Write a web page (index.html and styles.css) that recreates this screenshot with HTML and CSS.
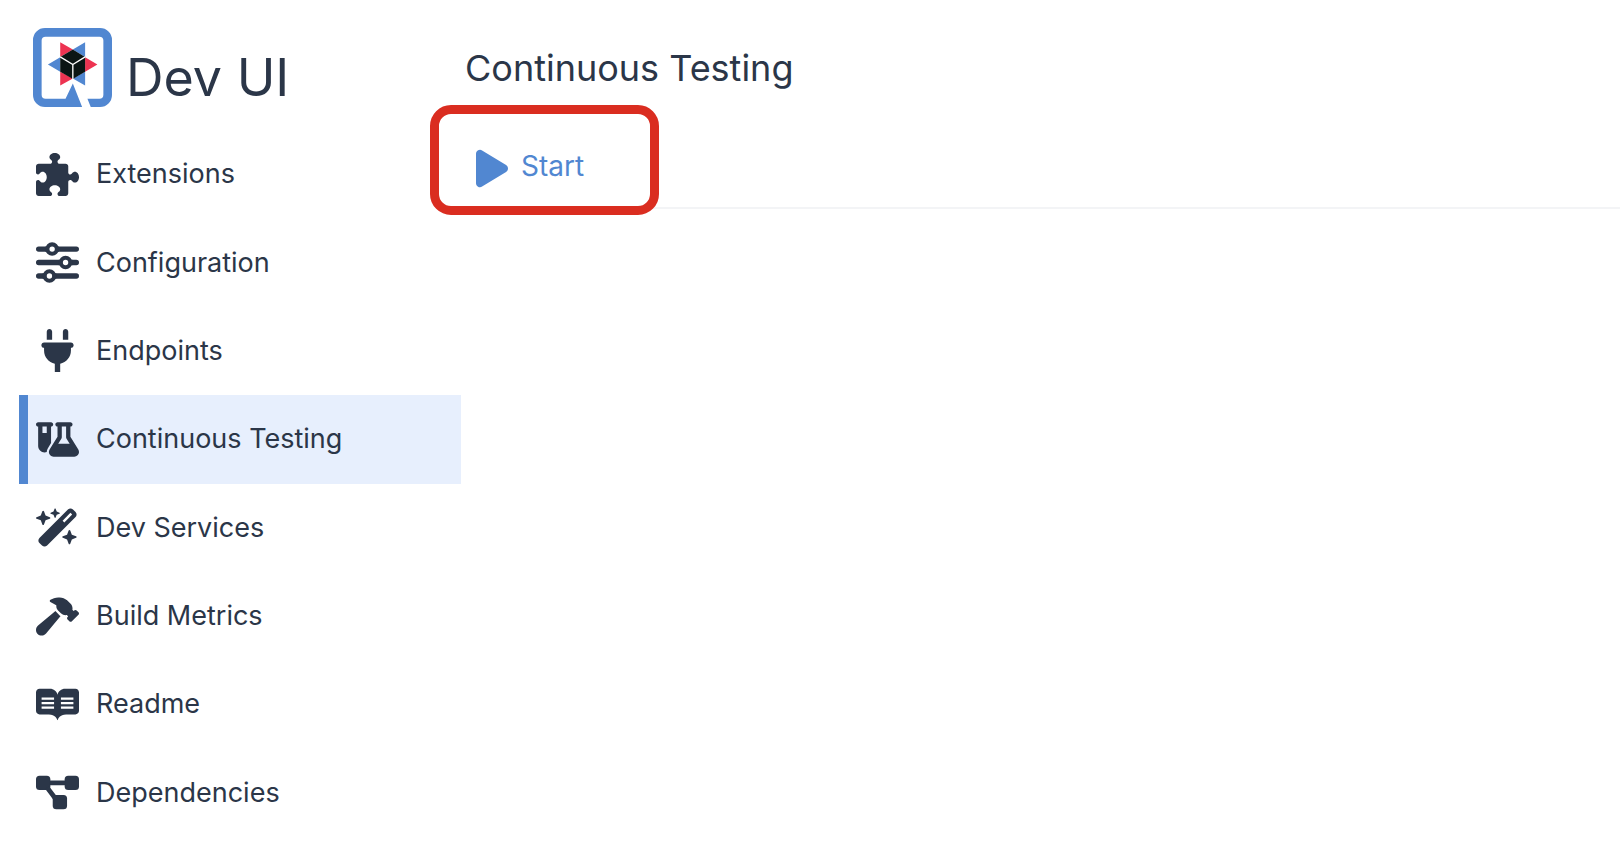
FILE: index.html
```html
<!DOCTYPE html>
<html lang="en">
<head>
<meta charset="utf-8">
<title>Dev UI - Continuous Testing</title>
<link rel="stylesheet" href="styles.css">
</head>
<body>
<div class="app">
  <aside class="sidebar">
    <div class="brand">
      <svg class="logo" viewBox="14 17 238 238" aria-hidden="true">
        <path fill="#5187d1" fill-rule="evenodd" d="M50 17H216A36 36 0 0 1 252 53V219A36 36 0 0 1 216 255H188L178 230H214A12 12 0 0 0 226 218V55A12 12 0 0 0 214 43H52A12 12 0 0 0 40 55V218A12 12 0 0 0 52 230H112L134 184L162 255H50A36 36 0 0 1 14 219V53A36 36 0 0 1 50 17Z"/>
        <path fill="#ed3351" d="M96 60L134 82L96 104ZM208 127L171 105V149ZM96 149V190L134 169Z"/>
        <path fill="#5187d1" d="M171 60L134 82L171 104ZM59 127L96 105V149ZM171 149V190L134 169Z"/>
        <path fill="#0b1514" d="M134 82L171 104V149L134 171L96 149V104Z"/>
        <path fill="none" stroke="#fff" stroke-width="4" d="M96 104L134 127L171 104M134 127V171"/>
      </svg>
      <span class="brand-name">Dev UI</span>
    </div>
    <nav class="menu">
      <a class="item" href="#extensions">
        <svg class="icon" viewBox="0 0 512 512" aria-hidden="true"><path d="M512 288c0 35.35-21.49 64-48 64c-32.43 0-31.72-32-55.64-32C394.9 320 384 330.9 384 344.4V480c0 17.67-14.33 32-32 32h-71.64C266.9 512 256 501.1 256 487.6C256 463.1 288 464.4 288 432c0-26.51-28.65-48-64-48s-64 21.49-64 48c0 32.43 32 31.72 32 55.64C192 501.1 181.1 512 167.6 512H32c-17.67 0-32-14.33-32-32v-135.6C0 330.9 10.91 320 24.36 320C48.05 320 47.6 352 80 352C106.5 352 128 323.3 128 288S106.5 223.1 80 223.1c-32.43 0-31.72 32-55.64 32C10.91 255.1 0 245.1 0 231.6v-71.64c0-17.67 14.33-31.1 32-31.1h135.6C181.1 127.1 192 117.1 192 103.6c0-23.69-32-23.24-32-55.64c0-26.51 28.65-47.1 64-47.1s64 21.49 64 47.1c0 32.43-32 31.72-32 55.64c0 13.45 10.91 24.36 24.36 24.36H352c17.67 0 32 14.33 32 31.1v71.64c0 13.45 10.91 24.36 24.36 24.36c23.69 0 23.24-32 55.64-32C490.5 223.1 512 252.7 512 288z"/></svg>
        <span>Extensions</span>
      </a>
      <a class="item" href="#configuration">
        <svg class="icon line" viewBox="0 0 512 512" aria-hidden="true"><path stroke-width="64" stroke-linecap="round" d="M32 96H112M272 96H480M32 256H272M432 256H480M32 416H80M240 416H480"/><path stroke-width="64" d="M110 96H140M244 96H274M270 256H300M404 256H434M78 416H108M212 416H242"/><g stroke-width="48"><circle cx="192" cy="96" r="56"/><circle cx="352" cy="256" r="56"/><circle cx="160" cy="416" r="56"/></g></svg>
        <span>Configuration</span>
      </a>
      <a class="item" href="#endpoints">
        <svg class="icon" viewBox="-64 0 512 512" aria-hidden="true"><path d="M96 0C78.3 0 64 14.3 64 32v96h64V32c0-17.7-14.3-32-32-32zM288 0c-17.7 0-32 14.3-32 32v96h64V32c0-17.7-14.3-32-32-32zM32 160c-17.7 0-32 14.3-32 32s14.3 32 32 32v32c0 77.4 55 142 128 156.8V512h64V412.8C297 398 352 333.4 352 256V224c17.7 0 32-14.3 32-32s-14.3-32-32-32H32z"/></svg>
        <span>Endpoints</span>
      </a>
      <a class="item active" href="#continuous-testing" aria-current="page">
        <svg class="icon" viewBox="0 -64 640 640" aria-hidden="true"><path d="M175 389.4c-9.800 16-15 34.300-15 53.100c-10 3.500-20.800 5.500-32 5.500c-53 0-96-43-96-96V64C14.300 64 0 49.700 0 32S14.300 0 32 0H96h64 64c17.700 0 32 14.300 32 32s-14.300 32-32 32V309.900l-49 79.600zM96 64v96h64V64H96zM352 0H480h32c17.700 0 32 14.300 32 32s-14.300 32-32 32V214.900L629.700 406.200c6.700 10.900 10.300 23.500 10.300 36.400c0 38.300-31.100 69.400-69.400 69.400H261.400c-38.300 0-69.400-31.100-69.400-69.400c0-12.800 3.600-25.400 10.300-36.400L320 214.900V64c-17.700 0-32-14.300-32-32s14.300-32 32-32h32zm32 64V224c0 5.900-1.600 11.700-4.700 16.800L330.500 320h171l-48.800-79.200c-3.100-5-4.700-10.800-4.700-16.800V64H384z"/></svg>
        <span>Continuous Testing</span>
      </a>
      <a class="item" href="#dev-services">
        <svg class="icon" viewBox="0 -32 576 576" aria-hidden="true"><path d="M234.7 42.7L197 56.8c-3 1.100-5 4-5 7.200s2 6.100 5 7.200l37.700 14.100L248.800 123c1.100 3 4 5 7.200 5s6.100-2 7.200-5l14.100-37.700L315 71.200c3-1.100 5-4 5-7.200s-2-6.100-5-7.200L277.300 42.700 263.200 5c-1.100-3-4-5-7.200-5s-6.100 2-7.200 5L234.700 42.700zM46.100 395.400c-18.700 18.700-18.700 49.100 0 67.900l34.600 34.600c18.700 18.700 49.100 18.700 67.900 0L529.900 116.500c18.700-18.700 18.700-49.100 0-67.900L495.300 14.100c-18.700-18.700-49.100-18.700-67.900 0L46.100 395.400zM484.600 82.600l-105 105-23.300-23.300 105-105 23.300 23.300zM7.500 117.200C3 118.900 0 123.200 0 128s3 9.100 7.500 10.800L64 160l21.200 56.500c1.700 4.500 6 7.500 10.800 7.500s9.100-3 10.800-7.500L128 160l56.500-21.200c4.500-1.700 7.500-6 7.500-10.800s-3-9.100-7.500-10.800L128 96 106.800 39.500C105.100 35 100.800 32 96 32s-9.100 3-10.800 7.500L64 96 7.500 117.200zm352 256c-4.500 1.700-7.500 6-7.500 10.800s3 9.100 7.500 10.800L416 416l21.200 56.500c1.700 4.500 6 7.500 10.800 7.500s9.100-3 10.800-7.500L480 416l56.500-21.200c4.500-1.700 7.500-6 7.500-10.800s-3-9.100-7.500-10.800L480 352l-21.200-56.500c-1.700-4.500-6-7.500-10.800-7.500s-9.100 3-10.800 7.500L416 352l-56.500 21.200z"/></svg>
        <span>Dev Services</span>
      </a>
      <a class="item" href="#build-metrics">
        <svg class="icon" viewBox="0 -32 576 576" aria-hidden="true"><path d="M413.5 237.5c-28.200 4.800-58.200-3.600-80-25.400l-38.100-38.100C280.400 159 272 138.800 272 117.600V105.500L192.300 62c-5.300-2.900-8.600-8.600-8.300-14.700s3.900-11.500 9.500-14l47.200-21C259.100 4.200 279 0 299.200 0h18.100c36.700 0 72 14 98.700 39.100l44.600 42c24.200 22.800 33.200 55.700 26.600 86L503 183l8-8c9.400-9.400 24.600-9.400 33.900 0l24 24c9.400 9.400 9.400 24.600 0 33.900l-88 88c-9.400 9.400-24.600 9.400-33.900 0l-24-24c-9.400-9.400-9.400-24.600 0-33.900l8-8-17.500-17.500zM27.400 377.100L260.900 182.600c3.500 4.900 7.500 9.600 11.800 14l38.100 38.100c6 6 12.400 11.200 19.200 15.700L134.900 484.600c-14.500 17.400-36 27.400-58.600 27.400C34.100 512 0 477.800 0 435.700c0-22.600 10.100-44.100 27.400-58.600z"/></svg>
        <span>Build Metrics</span>
      </a>
      <a class="item" href="#readme">
        <svg class="icon" viewBox="0 -32 576 576" aria-hidden="true"><path d="M528.3 46.5H388.500c-48.100 0-89.900 33.300-100.400 80.300-10.600-47-52.300-80.300-100.400-80.300H48c-26.500 0-48 21.500-48 48v245.800c0 26.500 21.500 48 48 48h89.700c102.200 0 132.700 24.400 147.300 75 .7 2.800 5.200 2.800 6 0 14.700-50.600 45.200-75 147.300-75H528c26.500 0 48-21.500 48-48V94.600c0-26.400-21.300-47.900-47.700-48.100z"/><path stroke="#fff" stroke-width="30" d="M75 177H242M75 238H242M75 299H242M334 177H501M334 238H501M334 299H501"/></svg>
        <span>Readme</span>
      </a>
      <a class="item" href="#dependencies">
        <svg class="icon" viewBox="0 -32 576 576" aria-hidden="true"><rect y="32" width="192" height="192" rx="48"/><rect x="384" y="32" width="192" height="192" rx="48"/><rect x="224" y="288" width="192" height="192" rx="48"/><path class="link" d="M180 128H396M150 190L270 350"/></svg>
        <span>Dependencies</span>
      </a>
    </nav>
  </aside>
  <main class="content">
    <h1 class="title">Continuous Testing</h1>
    <div class="toolbar">
      <button class="start" type="button">
        <svg class="play" viewBox="0 0 384 512" aria-hidden="true"><path d="M73 39c-14.800-9.100-33.400-9.400-48.500-.9S0 62.600 0 80V432c0 17.400 9.400 33.400 24.500 41.900s33.700 8.100 48.500-1L361 297c14.300-8.700 23-24.200 23-41s-8.700-32.200-23-41L73 39z"/></svg>
        <span>Start</span>
      </button>
    </div>
  </main>
</div>
</body>
</html>
```

FILE: styles.css
```css
*,
*::after {
  box-sizing: border-box;
}

body {
  margin: 0;
  background: #fff;
  color: #2b3648;
  font-family: Inter, "Liberation Sans", sans-serif;
}

.app {
  display: grid;
  grid-template-columns: 461px 1fr;
  min-height: 100vh;
}

.sidebar {
  display: flex;
  flex-direction: column;
  padding: 28px 0 23px 19px;
}

.brand {
  display: flex;
  gap: 14px;
  height: 102px;
  padding-left: 14px;
}

.logo {
  width: 79px;
  height: 79px;
}

.brand-name {
  padding-top: 18px;
  font-size: 52px;
  line-height: 64px;
}

.menu {
  display: grid;
  flex: 1;
  grid-auto-rows: 1fr;
}

.item {
  display: flex;
  align-items: center;
  gap: 17px;
  padding-left: 8px;
  border-left: 9px solid transparent;
  color: inherit;
  font-size: 27px;
  line-height: 32px;
  text-decoration: none;
}

.item.active {
  border-left-color: #5187d1;
  background: #e7effd;
}

.icon {
  width: 43px;
  height: 43px;
  fill: #2b3648;
}

.icon.line {
  fill: none;
  stroke: #2b3648;
}

.link {
  fill: none;
  stroke: #2b3648;
  stroke-width: 64;
}

.content {
  min-width: 0;
}

.title {
  margin: 0;
  padding: 45px 0 0 4px;
  font-size: 36px;
  font-weight: 400;
  line-height: 46px;
}

.toolbar {
  position: relative;
  height: 118px;
  padding: 56px 0 0 15px;
  border-bottom: 2px solid #f3f4f6;
}

/* Highlight frame around the start action */
.toolbar::after {
  content: "";
  position: absolute;
  top: 14px;
  left: -31px;
  width: 229px;
  height: 110px;
  border: 9px solid #da2d20;
  border-radius: 21px;
  pointer-events: none;
}

.start {
  display: flex;
  gap: 13px;
  padding: 0;
  border: 0;
  background: none;
  color: #5187d1;
  font: inherit;
  font-size: 28px;
  line-height: 38px;
  cursor: pointer;
}

.play {
  width: 32px;
  height: 43px;
  fill: #5187d1;
}
```
